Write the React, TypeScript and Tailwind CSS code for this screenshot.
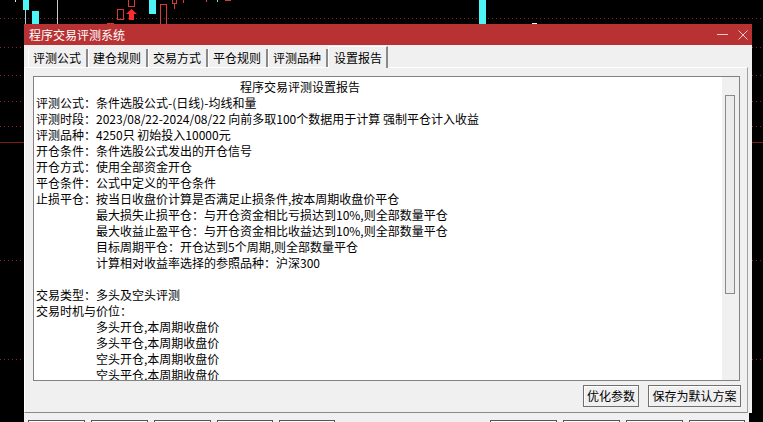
import React from "react";

const tabs = ["评测公式", "建仓规则", "交易方式", "平仓规则", "评测品种", "设置报告"];

const dottedRows = [18, 47, 75, 101, 126, 260, 359];

type Row = { label?: string; text: string; indent?: boolean };

const rows: Row[] = [
  { label: "评测公式：", text: "条件选股公式-(日线)-均线和量" },
  { label: "评测时段：", text: "2023/08/22-2024/08/22 向前多取100个数据用于计算 强制平仓计入收益" },
  { label: "评测品种：", text: "4250只 初始投入10000元" },
  { label: "开仓条件：", text: "条件选股公式发出的开仓信号" },
  { label: "开仓方式：", text: "使用全部资金开仓" },
  { label: "平仓条件：", text: "公式中定义的平仓条件" },
  { label: "止损平仓：", text: "按当日收盘价计算是否满足止损条件,按本周期收盘价平仓" },
  { indent: true, text: "最大损失止损平仓：与开仓资金相比亏损达到10%,则全部数量平仓" },
  { indent: true, text: "最大收益止盈平仓：与开仓资金相比收益达到10%,则全部数量平仓" },
  { indent: true, text: "目标周期平仓：开仓达到5个周期,则全部数量平仓" },
  { indent: true, text: "计算相对收益率选择的参照品种：沪深300" },
  { text: "" },
  { label: "交易类型：", text: "多头及空头评测" },
  { text: "交易时机与价位：" },
  { indent: true, text: "多头开仓,本周期收盘价" },
  { indent: true, text: "多头平仓,本周期收盘价" },
  { indent: true, text: "空头开仓,本周期收盘价" },
  { indent: true, text: "空头平仓,本周期收盘价" },
];

const ChartBackground = () => (
  <>
    {dottedRows.map((y) => (
      <div
        key={y}
        className="absolute left-0 w-full h-px bg-[repeating-linear-gradient(90deg,#8a2424_0_1px,transparent_1px_4px)]"
        style={{ top: y }}
      />
    ))}
    <div className="absolute left-0 top-[142px] w-full h-px bg-[#7a1c1c]" />

    {/* candles peeking above the dialog */}
    <div className="absolute left-[15px] top-0 w-px h-[2px] bg-[#dddddd]" />
    <div className="absolute left-[23px] top-0 w-[6px] h-[10px] bg-[#4df5f7]" />
    <div className="absolute left-[25px] top-[10px] w-px h-[14px] bg-[#9fd8d8]" />
    <div className="absolute left-[32px] top-[11px] w-[7px] h-[13px] bg-[#4df5f7]" />
    <div className="absolute left-[57px] top-0 w-px h-[24px] bg-[#c8c8c8]" />
    <div className="absolute left-[107px] top-[23px] w-[7px] h-px bg-[#e03030]" />
    <div className="absolute left-[117px] top-[9px] w-[7px] h-[11px] border border-[#d83a3a]" />
    <div className="absolute left-[128px] top-0 w-[7px] h-[7px] border border-t-0 border-[#d83a3a]" />
    <svg className="absolute left-[126px] top-[9px]" width="11" height="11" viewBox="0 0 11 11">
      <path d="M5.5 0 L11 5 L8 5 L8 11 L3 11 L3 5 L0 5 Z" fill="#ff2a2a" />
    </svg>
    <div className="absolute left-[149px] top-0 w-[7px] h-[14px] bg-[#4df5f7]" />
    <div className="absolute left-[160px] top-[4px] w-[7px] h-[20px] border border-b-0 border-[#d83a3a]" />
    <div className="absolute left-[172px] top-0 w-[5px] h-[4px] border border-t-0 border-[#d83a3a]" />
    <div className="absolute left-[174px] top-[4px] w-px h-[5px] bg-[#d83a3a]" />
    <div className="absolute left-[183px] top-0 w-px h-[3px] bg-[#d83a3a]" />
    <div className="absolute left-[206px] top-0 w-px h-[2px] bg-[#d83a3a]" />
    <div className="absolute left-[217px] top-0 w-px h-[2px] bg-[#4df5f7]" />
    <div className="absolute left-[225px] top-0 w-[6px] h-px bg-[#d83a3a]" />
    <div className="absolute left-[479px] top-0 w-[7px] h-[24px] bg-[#4df5f7]" />
    <div className="absolute left-[532px] top-[23px] w-[5px] h-px bg-[#f0f0f0]" />
  </>
);

const Button = ({ label, className }: { label: string; className: string }) => (
  <div
    className={`h-[22px] flex items-center justify-center border border-[#707070] bg-[#f0f0f0] shadow-[inset_1px_1px_0_#ffffff] text-[12px] text-black ${className}`}
  >
    {label}
  </div>
);

const LowerButton = ({ className }: { className: string }) => (
  <div className={`h-[10px] border border-[#555555] bg-[#f0f0f0] shadow-[inset_1px_1px_0_#ffffff] ${className}`} />
);

export default function App() {
  return (
    <div className="relative w-[763px] h-[422px] overflow-hidden bg-black font-['Noto_Sans_CJK_SC','Noto_Sans',sans-serif]">
      <ChartBackground />

      {/* dialog window */}
      <div className="absolute left-[24px] top-[24px] w-[728px] flex flex-col bg-[#f0f0f0]">
        <div className="h-[21px] flex items-center bg-[#b83234] pl-[5px] pr-[4px] text-white text-[12px] leading-none">
          <span>程序交易评测系统</span>
          <div className="ml-auto flex items-center gap-[10px]">
            <svg width="11" height="11" viewBox="0 0 11 11">
              <path d="M0 5.5 H11" stroke="#f4c8c8" strokeWidth="1" />
            </svg>
            <svg width="10" height="10" viewBox="0 0 10 10">
              <path d="M0.5 0.5 L9.5 9.5 M9.5 0.5 L0.5 9.5" stroke="#f4c8c8" strokeWidth="1" />
            </svg>
          </div>
        </div>

        <div className="h-[22px] flex items-end pl-[4px] text-[12px] text-black">
          {tabs.map((tab, i) =>
            i === tabs.length - 1 ? (
              <div
                key={tab}
                className="relative z-10 -mb-px w-[60px] h-[22px] pl-[5px] pt-[3px] leading-[16px] bg-[#f0f0f0] border-l border-t border-white border-r-2 border-r-[#8a8a8a]"
              >
                {tab}
              </div>
            ) : (
              <div
                key={tab}
                className="w-[60px] h-[18px] pl-[4px] leading-[17px] border-l border-l-white border-r-2 border-r-[#8a8a8a]"
              >
                {tab}
              </div>
            )
          )}
        </div>

        <div className="w-[724px] h-[346px] flex flex-col border border-white border-r-[#a0a0a0] border-b-[#8a8a8a] pt-[8px] pl-[8px] pr-[7px] pb-[5px]">
          <div className="h-[305px] flex border border-[#828282] bg-white">
            <div className="flex-1 overflow-hidden pl-[2px] pt-[2px] text-[12px] leading-[16px] text-black whitespace-pre">
              <div className="pl-[204px]">程序交易评测设置报告</div>
              {rows.map((row, i) => (
                <div key={i} className={`h-[16px] flex ${row.indent ? "pl-[60px]" : ""}`}>
                  {row.label && <span className="w-[60px] shrink-0">{row.label}</span>}
                  <span>{row.text}</span>
                </div>
              ))}
            </div>
            <div className="w-[17px] bg-[#f0f0f0] pt-[18px] pl-[3px]">
              <div className="w-[10px] h-[199px] border border-[#8a8a8a] bg-[#ececec]" />
            </div>
          </div>
          <div className="mt-[4px] flex justify-end gap-[9px] -mr-px">
            <Button label="优化参数" className="w-[56px]" />
            <Button label="保存为默认方案" className="w-[93px]" />
          </div>
        </div>
      </div>

      {/* window underneath the dialog */}
      <div className="absolute left-[24px] top-[413px] w-[725px] h-[9px] flex items-start pt-[7px] px-[4px] bg-[#f0f0f0]">
        <div className="flex gap-[6px]">
          <LowerButton className="w-[57px]" />
          <LowerButton className="w-[57px]" />
          <LowerButton className="w-[57px]" />
          <LowerButton className="w-[56px]" />
          <LowerButton className="w-[56px]" />
        </div>
        <div className="ml-auto flex gap-[6px]">
          <LowerButton className="w-[67px]" />
          <LowerButton className="w-[57px]" />
          <LowerButton className="w-[57px]" />
          <LowerButton className="w-[56px]" />
        </div>
      </div>
    </div>
  );
}
